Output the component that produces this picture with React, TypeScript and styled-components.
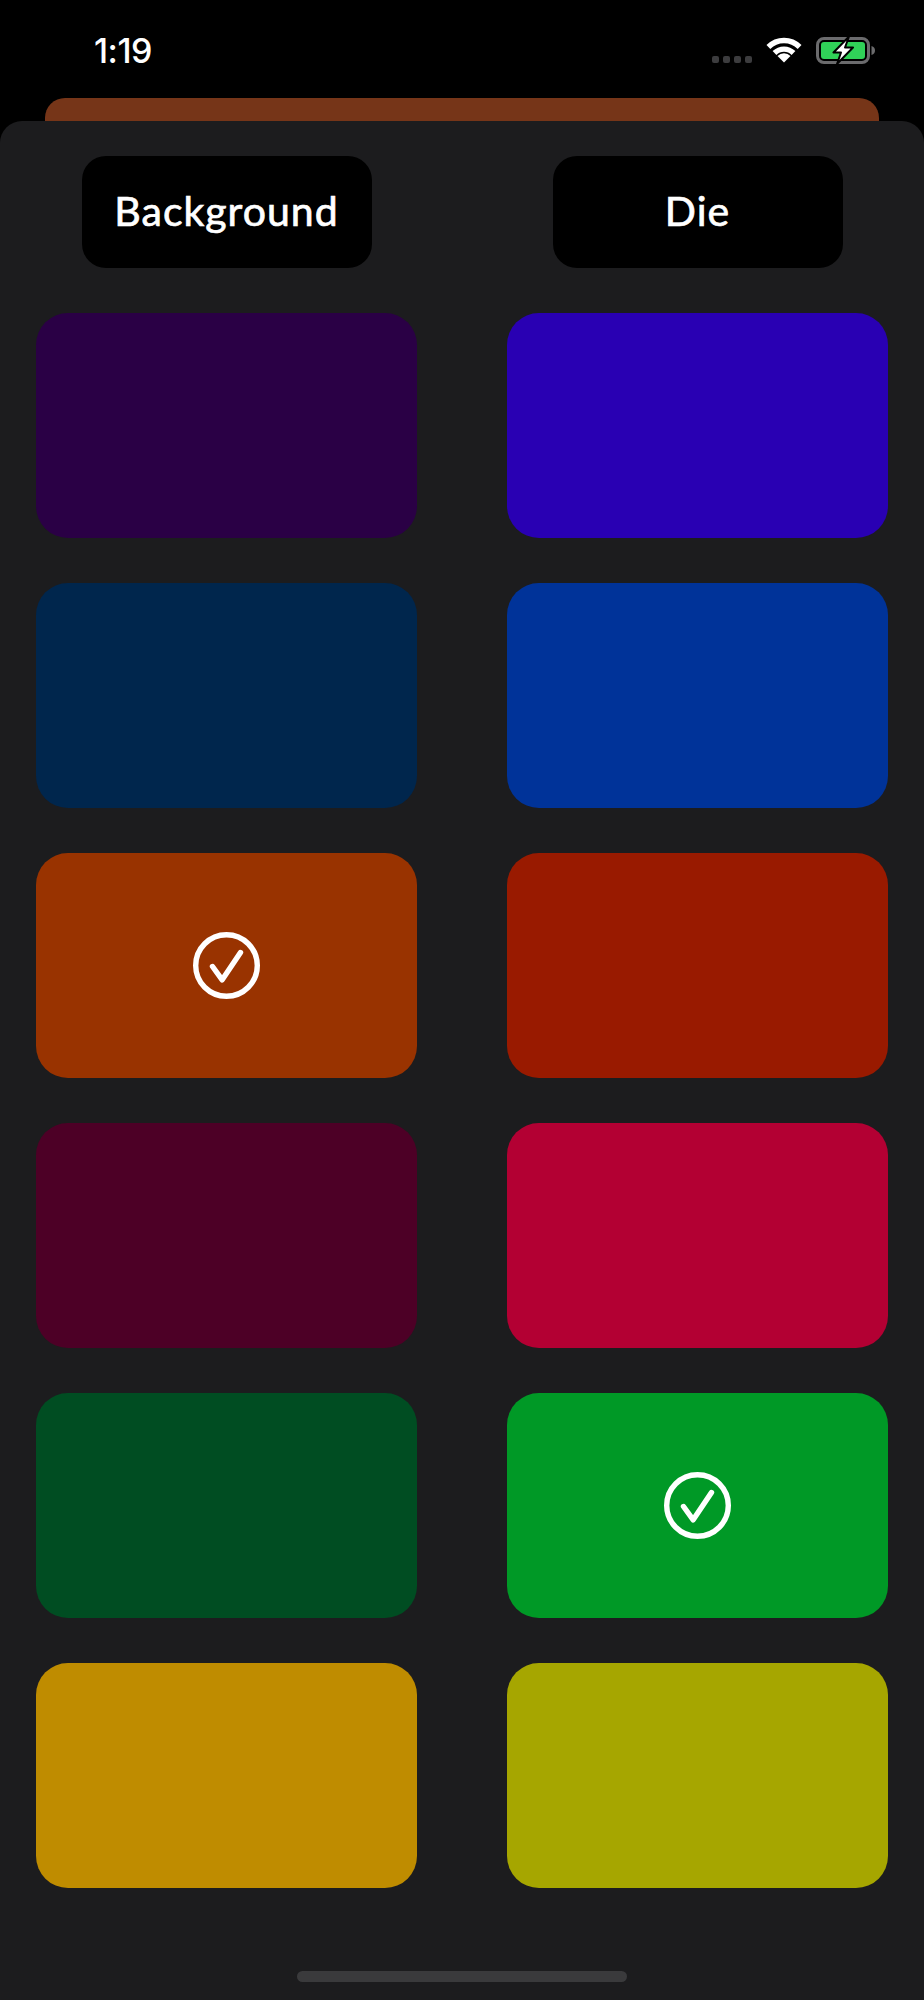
import { Fragment } from 'react';
import styled, { createGlobalStyle } from 'styled-components';

const GlobalStyle = createGlobalStyle`
  html, body {
    margin: 0;
    background: #000;
  }
`;

const Page = styled.div`
  width: 924px;
  height: 2000px;
  background: #000;
  overflow: hidden;
  display: flex;
  flex-direction: column;
`;

const StatusBar = styled.div`
  height: 98px;
  box-sizing: border-box;
  padding: 2px 48px 0 94px;
  display: flex;
  align-items: center;
  justify-content: space-between;
`;

const Time = styled.span`
  font-family: Inter, 'Liberation Sans', sans-serif;
  font-size: 34px;
  font-weight: 500;
  letter-spacing: -0.5px;
  color: #fff;
`;

const StatusIcons = styled.div`
  display: flex;
  align-items: center;
  gap: 14px;
`;

const SignalDots = styled.div`
  display: flex;
  gap: 4px;
  margin-top: 18px;
`;

const SignalDot = styled.span`
  width: 7px;
  height: 7px;
  border-radius: 2px;
  background: #3c3c3e;
`;

const PeekCard = styled.div`
  height: 23px;
  margin: 0 45px;
  flex: none;
  border-radius: 20px 20px 0 0;
  background: #763518;
`;

const Sheet = styled.div`
  flex: 1;
  box-sizing: border-box;
  padding: 35px 36px 0;
  border-radius: 22px 22px 0 0;
  background: #1c1c1e;
  display: flex;
  flex-direction: column;
  align-items: center;
`;

const Grid = styled.div`
  width: 100%;
  display: grid;
  grid-template-columns: 381px 381px;
  justify-content: space-between;
  row-gap: 45px;
  justify-items: center;
`;

const TabButton = styled.div`
  width: 290px;
  height: 112px;
  border-radius: 24px;
  background: #000;
  color: #fff;
  display: flex;
  align-items: center;
  justify-content: center;
  padding-bottom: 4px;
  box-sizing: border-box;
  font-family: Lato, 'Open Sans', sans-serif;
  font-size: 41px;
  font-weight: 400;
  letter-spacing: 1px;
  -webkit-text-stroke: 0.7px #fff;
`;

const Swatch = styled.div<{ $color: string }>`
  width: 100%;
  height: 225px;
  border-radius: 32px;
  background: ${(p) => p.$color};
  display: flex;
  align-items: center;
  justify-content: center;
`;

const HomeIndicator = styled.div`
  width: 330px;
  height: 11px;
  margin-top: 83px;
  border-radius: 6px;
  background: #3a3a3c;
`;

const CheckIcon = () => (
  <svg width="67" height="67" viewBox="0 0 67 67" fill="none" stroke="#fff">
    <circle cx="33.5" cy="33.5" r="30.8" strokeWidth="5.4" />
    <path
      d="M19.5 34.5 L29.2 47.8 L47.5 20.5"
      strokeWidth="5.4"
      strokeLinecap="round"
      strokeLinejoin="round"
    />
  </svg>
);

const WifiIcon = () => (
  <svg width="36" height="26" viewBox="0 0 36 26" fill="none">
    <path d="M2.4 10 A22 22 0 0 1 33.6 10" stroke="#fff" strokeWidth="5.4" />
    <path d="M8.5 16 A13.5 13.5 0 0 1 27.5 16" stroke="#fff" strokeWidth="5.4" />
    <path d="M18 25.5 L11.5 19 A9.2 9.2 0 0 1 24.5 19 Z" fill="#fff" />
  </svg>
);

const BatteryIcon = () => (
  <svg width="60" height="28" viewBox="0 0 60 28" fill="none">
    <rect x="1.5" y="2.5" width="51" height="24" rx="6.5" stroke="#6b6b6d" strokeWidth="3" />
    <rect x="5" y="6" width="44" height="17" rx="3" fill="#30d158" />
    <path d="M55.5 10 C58 10.5 59 12.5 59 14.5 C59 16.5 58 18.5 55.5 19 Z" fill="#6b6b6d" />
    <path
      d="M33 0.5 L17.5 16.5 H25 L21 28 L37 11.5 H29 Z"
      fill="#fff"
      stroke="#000"
      strokeWidth="2"
      strokeLinejoin="round"
    />
  </svg>
);

const ROWS = [
  { background: '#2a0045', die: '#2900b3' },
  { background: '#00264d', die: '#003399' },
  { background: '#993300', die: '#991a00', selected: 'background' },
  { background: '#4d0026', die: '#b30033' },
  { background: '#004d22', die: '#009926', selected: 'die' },
  { background: '#bf8c00', die: '#a6a600' },
];

export default function App() {
  return (
    <Page>
      <GlobalStyle />
      <StatusBar>
        <Time>1:19</Time>
        <StatusIcons>
          <SignalDots>
            <SignalDot />
            <SignalDot />
            <SignalDot />
            <SignalDot />
          </SignalDots>
          <WifiIcon />
          <BatteryIcon />
        </StatusIcons>
      </StatusBar>
      <PeekCard />
      <Sheet>
        <Grid>
          <TabButton>Background</TabButton>
          <TabButton>Die</TabButton>
          {ROWS.map((row) => (
            <Fragment key={row.background}>
              <Swatch $color={row.background}>
                {row.selected === 'background' && <CheckIcon />}
              </Swatch>
              <Swatch $color={row.die}>
                {row.selected === 'die' && <CheckIcon />}
              </Swatch>
            </Fragment>
          ))}
        </Grid>
        <HomeIndicator />
      </Sheet>
    </Page>
  );
}
